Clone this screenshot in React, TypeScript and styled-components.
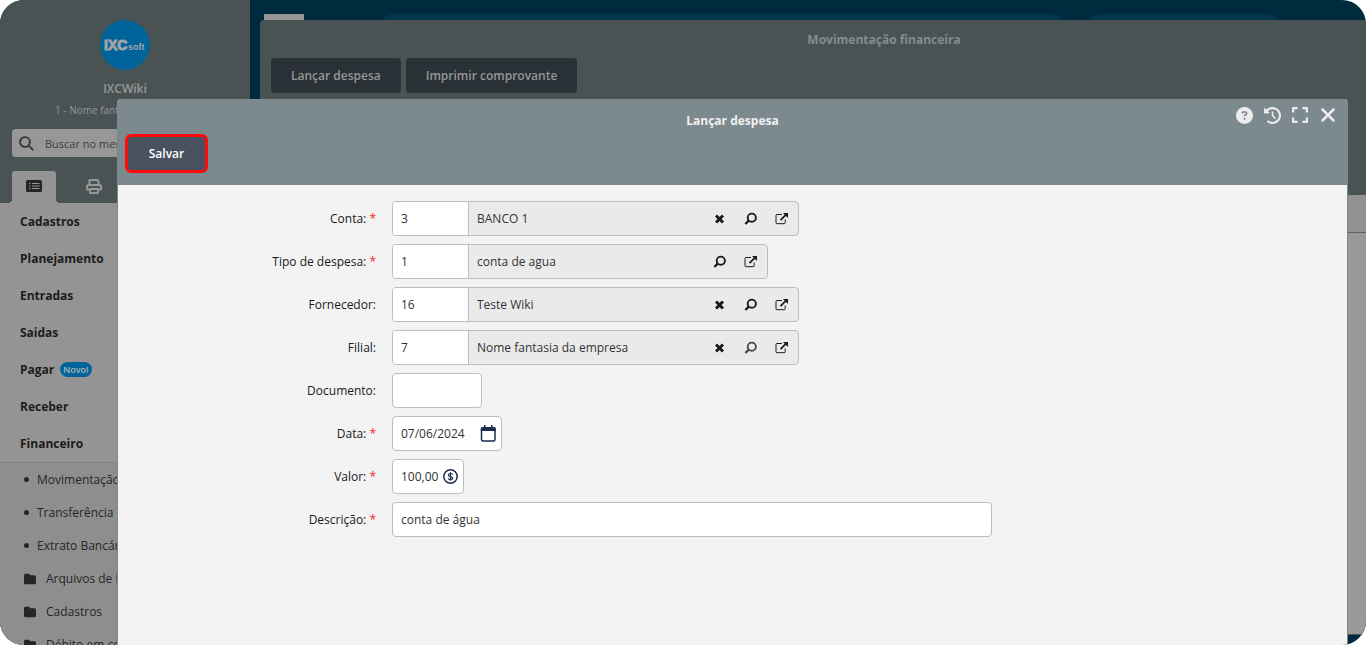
import React from "react";
import styled, { createGlobalStyle } from "styled-components";
import { FaCircleQuestion, FaClockRotateLeft, FaFolder } from "react-icons/fa6";

const GlobalStyle = createGlobalStyle`
  *, *::before, *::after { box-sizing: border-box; }
  body { margin: 0; background: #fff; font: 12px/18px "Open Sans", "Noto Sans", sans-serif; color: #262626; }
  button, input { font: inherit; color: inherit; }
  button { cursor: pointer; }
`;

const Screen = styled.div`
  position: relative;
  display: flex;
  height: 100vh;
  overflow: hidden;
  border-radius: 24px;
  background: #002b3f;
`;

/* ---------- side menu ---------- */

const Sidebar = styled.aside`
  flex: 0 0 250px;
  display: flex;
  flex-direction: column;
  background: #4a5354;
`;

const Profile = styled.div`
  display: flex;
  flex-direction: column;
  align-items: center;
  padding-top: 20px;
  color: #979797;
`;

const UserName = styled.strong`
  margin-top: 10px;
  font-weight: 600;
`;

const Company = styled.span`
  margin-top: 4px;
  width: 140px;
  font-size: 10px;
  line-height: 16px;
  white-space: nowrap;
`;

const SearchBox = styled.label`
  display: flex;
  align-items: center;
  gap: 11px;
  height: 28px;
  margin: 11px 12px 0;
  padding-left: 7px;
  border-radius: 4px;
  background: #979797;
  color: #33383a;
`;

const SearchInput = styled.input`
  flex: 1;
  min-width: 0;
  padding: 2px 0 0;
  border: 0;
  outline: 0;
  background: transparent;
  font-size: 11px;
  &::placeholder { color: #3d3d3d; opacity: 1; }
`;

const Tabs = styled.div`
  display: flex;
  gap: 16px;
  height: 32px;
  margin-top: 14px;
  padding-left: 12px;
`;

const Tab = styled.button<{ $active?: boolean }>`
  position: relative;
  display: flex;
  align-items: center;
  justify-content: center;
  width: 44px;
  padding: 0 0 2px;
  border: 0;
  border-radius: 3px 3px 0 0;
  background: ${(p) => (p.$active ? "#949494" : "transparent")};
  color: ${(p) => (p.$active ? "#262626" : "#979797")};

  &::before, &::after {
    content: ${(p) => (p.$active ? '""' : "none")};
    position: absolute;
    bottom: 0;
    width: 4px;
    height: 4px;
  }
  &::before {
    right: 100%;
    background: radial-gradient(circle at 0 0, transparent 4px, #949494 4px);
  }
  &::after {
    left: 100%;
    background: radial-gradient(circle at 100% 0, transparent 4px, #949494 4px);
  }
`;

const Menu = styled.nav`
  flex: 1;
  min-height: 0;
  overflow: hidden;
  background: #949494;
`;

const MenuLink = styled.a`
  display: flex;
  align-items: center;
  gap: 6px;
  height: 37px;
  padding-left: 20px;
  color: #1c1c1c;
  font-weight: 700;
  text-decoration: none;
`;

const NewBadge = styled.span`
  padding: 0 3px;
  border-radius: 8px;
  background: #00649a;
  color: #a9b7be;
  font-size: 9px;
  line-height: 15px;
  font-weight: 600;
`;

const SubMenu = styled.div`
  border-top: 1px solid #828282;
  background: #8e8e8e;
`;

const SubLink = styled.a<{ $folder?: boolean }>`
  display: flex;
  align-items: center;
  gap: ${(p) => (p.$folder ? 10 : 8)}px;
  height: 33px;
  padding-left: 24px;
  color: #262626;
  text-decoration: none;
  white-space: nowrap;
`;

const Dot = styled.span`
  width: 5px;
  height: 5px;
  border-radius: 50%;
  background: #262626;
`;

/* ---------- background window ---------- */

const Workspace = styled.main`
  flex: 1;
  min-width: 0;
  display: flex;
  flex-direction: column;
  padding: 14px 0 10px 10px;
`;

const TopBar = styled.div`
  display: flex;
  height: 6px;
  padding-left: 4px;
  overflow: hidden;
`;

const LogoStrip = styled.span`
  width: 40px;
  background: #979797;
`;

const Pill = styled.span<{ $width: number; $gap: number }>`
  flex: 0 0 ${(p) => p.$width}px;
  height: 28px;
  margin-left: ${(p) => p.$gap}px;
  border-radius: 14px;
  background: #00364e;
`;

const Window = styled.section`
  flex: 1;
  display: flex;
  flex-direction: column;
  margin-right: -142px;
  border-radius: 4px 4px 0 0;
  background: #4a5354;
`;

const WindowHead = styled.header`
  height: 175px;
  padding: 11px 11px 0;
`;

const WindowTitle = styled.h2`
  margin: 0;
  color: #868b8c;
  font-size: 12px;
  line-height: 18px;
  font-weight: 700;
  text-align: center;
`;

const WindowActions = styled.div`
  display: flex;
  gap: 5px;
  margin-top: 9px;
`;

const DarkButton = styled.button`
  height: 35px;
  padding: 0 20px;
  border: 0;
  border-radius: 4px;
  background: #293036;
  color: #979797;
  font-weight: 600;
`;

const GridHead = styled.div`
  height: 38px;
  border-bottom: 1px solid #5c6364;
  background: #929292;
`;

const GridBody = styled.div`
  flex: 1;
  margin-bottom: 1px;
  background: #999;
`;

/* ---------- dialog ---------- */

const Dialog = styled.section`
  position: absolute;
  inset: 99px 18px 0 117px;
  display: flex;
  flex-direction: column;
  border: solid #7c898e;
  border-width: 0 1px;
  border-radius: 4px 4px 0 0;
  background: #f3f3f3;
  overflow: hidden;
`;

const DialogHead = styled.header`
  position: relative;
  height: 86px;
  padding: 13px 7px 0;
  background: #7c898e;
`;

const DialogTitle = styled.h1`
  margin: 0;
  color: #f0f0f0;
  font-size: 12px;
  line-height: 18px;
  font-weight: 700;
  text-align: center;
`;

const DialogTools = styled.div`
  position: absolute;
  top: 7px;
  right: 10px;
  display: flex;
  gap: 10px;
`;

const ToolButton = styled.button`
  display: grid;
  place-items: center;
  width: 18px;
  height: 18px;
  padding: 0;
  border: 0;
  background: transparent;
  color: #ececec;
`;

const SaveButton = styled.button`
  display: block;
  width: 83px;
  height: 39px;
  margin-top: 4px;
  border: 3px solid #fe0c0c;
  border-radius: 6px;
  background: #48525e;
  color: #fff;
  font-weight: 600;
`;

const Form = styled.form`
  display: flex;
  flex-direction: column;
  gap: 8px;
  padding-top: 16px;
`;

const Row = styled.div`
  display: flex;
  align-items: center;
  gap: 16px;
`;

const Label = styled.label`
  flex: 0 0 258px;
  color: #1a1a1a;
  text-align: right;
`;

const Required = styled.span`
  color: #fb1c1c;
`;

const Group = styled.div<{ $width: number; $lookup?: boolean }>`
  display: flex;
  align-items: center;
  width: ${(p) => p.$width}px;
  height: 35px;
  border: 1px solid #babec2;
  border-radius: 4px;
  background: ${(p) => (p.$lookup ? "#eaeaea" : "#fff")};
  color: #333;
  overflow: hidden;
`;

const CodeInput = styled.input`
  flex: 0 0 76px;
  width: 76px;
  height: 33px;
  padding: 0 8px;
  border: 0;
  border-right: 1px solid #babec2;
  outline: 0;
  background: #fff;
`;

const TextInput = styled.input`
  flex: 1;
  min-width: 0;
  height: 33px;
  padding: 0 0 0 8px;
  border: 0;
  outline: 0;
  background: transparent;
`;

const GroupTools = styled.div`
  display: flex;
  padding-right: 1px;
`;

const SmallTool = styled.button<{ $dim?: boolean }>`
  display: grid;
  place-items: center;
  width: 31px;
  height: 33px;
  padding: 0;
  border: 0;
  background: transparent;
  color: ${(p) => (p.$dim ? "#4a4a4a" : "#1a1a1a")};
`;

const FieldIcon = styled.button`
  display: grid;
  place-items: center;
  padding: 0;
  margin-right: 5px;
  border: 0;
  background: transparent;
  color: #1d2d50;
`;

const SearchIcon = () => (
  <svg width="15" height="15" viewBox="0 0 15 15" fill="none" stroke="currentColor" strokeWidth="1.900" strokeLinecap="round">
    <circle cx="6" cy="6" r="4.900" />
    <path d="M9.700 9.700l4 4" />
  </svg>
);

const ListIcon = () => (
  <svg width="16" height="12" viewBox="0 0 16 12">
    <rect width="16" height="12" rx="1.500" fill="currentColor" />
    <path d="M3 3.500h1.500M3 6h1.500M3 8.500h1.500M6 3.500h7.500M6 6h7.500M6 8.500h7.500" stroke="#949494" strokeWidth="1.100" />
  </svg>
);

const PrinterIcon = () => (
  <svg width="16" height="15" viewBox="0 0 16 15" fill="none" stroke="currentColor" strokeWidth="2" strokeLinejoin="round">
    <path d="M3.500 5.500V1h8l1 1v3.500" />
    <path d="M3.500 10.500H1V7.500Q1 6 2.700 6h10.600Q15 6 15 7.500v3h-2.500" />
    <path d="M4 10h8v4H4z" />
  </svg>
);

const ExpandIcon = () => (
  <svg width="16" height="16" viewBox="0 0 16 16" fill="none" stroke="currentColor" strokeWidth="2.200" strokeLinejoin="round">
    <path d="M1.100 5.500V1.100H5.500M10.500 1.100h4.400V5.500M14.900 10.500v4.400H10.500M5.500 14.900H1.100V10.500" />
  </svg>
);

const CloseIcon = () => (
  <svg width="14" height="14" viewBox="0 0 14 14" stroke="currentColor" strokeWidth="2.500" strokeLinecap="round">
    <path d="M1.500 1.500l11 11M12.500 1.500l-11 11" />
  </svg>
);

const ClearIcon = () => (
  <svg width="10" height="10" viewBox="0 0 10 10" stroke="currentColor" strokeWidth="3">
    <path d="M1 1.500l7 7M8 1.500l-7 7" />
  </svg>
);

const LensIcon = () => (
  <svg width="13" height="13" viewBox="0 0 13 13" fill="none" stroke="currentColor" strokeWidth="1.900">
    <circle cx="7.800" cy="5.700" r="4.100" />
    <path d="M4.800 8.700L1.300 12" strokeWidth="2.400" />
  </svg>
);

const OpenIcon = () => (
  <svg width="13" height="12" viewBox="0 0 13 12" fill="none" stroke="currentColor">
    <path d="M7 1.500H2Q1 1.500 1 2.500v7.200q0 1 1 1h7.200q1 0 1-1V6.500" strokeWidth="1" />
    <path d="M5.500 7.200L11 1.700" strokeWidth="1.700" />
    <path d="M8 0h5v5z" fill="currentColor" stroke="none" />
  </svg>
);

const CalendarIcon = () => (
  <svg width="16" height="17" viewBox="0 0 16 17">
    <rect x="1.500" y="3" width="13.500" height="13" rx="1.500" fill="none" stroke="currentColor" strokeWidth="1.500" />
    <path d="M0.800 3.500q0-1.500 1.500-1.500h12q1.500 0 1.500 1.500V6h-15zM4 0h1.500v3H4zM11 0h1.500v3H11z" fill="currentColor" />
  </svg>
);

const MoneyIcon = () => (
  <svg width="15" height="15" viewBox="0 0 15 15" fill="none" stroke="currentColor" strokeWidth="1.500">
    <circle cx="7.500" cy="7.500" r="6.700" />
    <path d="M9.700 5.600Q9.400 4.500 7.500 4.500T5.400 5.900Q5.400 7.100 7.500 7.500T9.700 9.100Q9.600 10.500 7.500 10.500T5.300 9.400M7.500 3.200v8.600" strokeWidth="1.200" />
  </svg>
);

const Logo = () => (
  <svg width="50" height="50" viewBox="0 0 50 50" role="img" aria-label="IXCsoft">
    <circle cx="25" cy="25" r="25" fill="#00649a" />
    <g fill="#a0a5a8" stroke="#a0a5a8" fontFamily="Liberation Sans, sans-serif" fontWeight="700">
      <text x="4" y="30" fontSize="14" strokeWidth="1">IXC</text>
      <text x="28" y="30" fontSize="9" strokeWidth="0">soft</text>
    </g>
  </svg>
);

type LookupProps = { id: string; label: string; required?: boolean; code: string; name: string; clearable?: boolean; dim?: boolean };

const LabelText = ({ id, label, required }: { id: string; label: string; required?: boolean }) => (
  <Label htmlFor={id}>
    {label}:{required && <Required> *</Required>}
  </Label>
);

const Lookup = ({ id, label, required, code, name, clearable, dim }: LookupProps) => (
  <Row>
    <LabelText id={id} label={label} required={required} />
    <Group $width={clearable ? 407 : 376} $lookup>
      <CodeInput id={id} defaultValue={code} />
      <TextInput aria-label={label} value={name} readOnly />
      <GroupTools>
        {clearable && <SmallTool type="button" aria-label="Limpar"><ClearIcon /></SmallTool>}
        <SmallTool type="button" aria-label="Pesquisar" $dim={dim}><LensIcon /></SmallTool>
        <SmallTool type="button" aria-label="Abrir"><OpenIcon /></SmallTool>
      </GroupTools>
    </Group>
  </Row>
);

type FieldProps = { id: string; label: string; required?: boolean; width: number; value?: string; icon?: React.ReactNode };

const Field = ({ id, label, required, width, value = "", icon }: FieldProps) => (
  <Row>
    <LabelText id={id} label={label} required={required} />
    <Group $width={width}>
      <TextInput id={id} defaultValue={value} />
      {icon && <FieldIcon type="button" aria-label={label}>{icon}</FieldIcon>}
    </Group>
  </Row>
);

const menu = ["Cadastros", "Planejamento", "Entradas", "Saidas", "Pagar", "Receber", "Financeiro"];
const pages = ["Movimentação", "Transferência", "Extrato Bancário"];
const folders = ["Arquivos de lote", "Cadastros", "Débito em conta"];

export default function App() {
  return (
    <>
      <GlobalStyle />
      <Screen>
        <Sidebar>
          <Profile>
            <Logo />
            <UserName>IXCWiki</UserName>
            <Company>1 - Nome fantasia</Company>
          </Profile>
          <SearchBox>
            <SearchIcon />
            <SearchInput placeholder="Buscar no menu" aria-label="Buscar no menu" />
          </SearchBox>
          <Tabs>
            <Tab $active aria-label="Menu"><ListIcon /></Tab>
            <Tab aria-label="Imprimir"><PrinterIcon /></Tab>
          </Tabs>
          <Menu>
            {menu.map((item) => (
              <MenuLink href="#" key={item}>
                {item}
                {item === "Pagar" && <NewBadge>Novo!</NewBadge>}
              </MenuLink>
            ))}
            <SubMenu>
              {pages.map((item) => (
                <SubLink href="#" key={item}><Dot />{item}</SubLink>
              ))}
              {folders.map((item) => (
                <SubLink href="#" key={item} $folder><FaFolder size={12} />{item}</SubLink>
              ))}
            </SubMenu>
          </Menu>
        </Sidebar>

        <Workspace>
          <TopBar>
            <LogoStrip />
            <Pill $width={686} $gap={76} />
            <Pill $width={193} $gap={21} />
          </TopBar>
          <Window>
            <WindowHead>
              <WindowTitle>Movimentação financeira</WindowTitle>
              <WindowActions>
                <DarkButton>Lançar despesa</DarkButton>
                <DarkButton>Imprimir comprovante</DarkButton>
              </WindowActions>
            </WindowHead>
            <GridHead />
            <GridBody />
          </Window>
        </Workspace>

        <Dialog role="dialog" aria-label="Lançar despesa">
          <DialogHead>
            <DialogTitle>Lançar despesa</DialogTitle>
            <SaveButton type="submit" form="expense">Salvar</SaveButton>
            <DialogTools>
              <ToolButton aria-label="Ajuda"><FaCircleQuestion size={17} /></ToolButton>
              <ToolButton aria-label="Histórico"><FaClockRotateLeft size={17} /></ToolButton>
              <ToolButton aria-label="Expandir"><ExpandIcon /></ToolButton>
              <ToolButton aria-label="Fechar"><CloseIcon /></ToolButton>
            </DialogTools>
          </DialogHead>
          <Form id="expense">
            <Lookup id="conta" label="Conta" required code="3" name="BANCO 1" clearable />
            <Lookup id="tipo" label="Tipo de despesa" required code="1" name="conta de agua" />
            <Lookup id="fornecedor" label="Fornecedor" code="16" name="Teste Wiki" clearable />
            <Lookup id="filial" label="Filial" code="7" name="Nome fantasia da empresa" clearable dim />
            <Field id="documento" label="Documento" width={90} />
            <Field id="data" label="Data" required width={110} value="07/06/2024" icon={<CalendarIcon />} />
            <Field id="valor" label="Valor" required width={72} value="100,00" icon={<MoneyIcon />} />
            <Field id="descricao" label="Descrição" required width={600} value="conta de água" />
          </Form>
        </Dialog>
      </Screen>
    </>
  );
}
